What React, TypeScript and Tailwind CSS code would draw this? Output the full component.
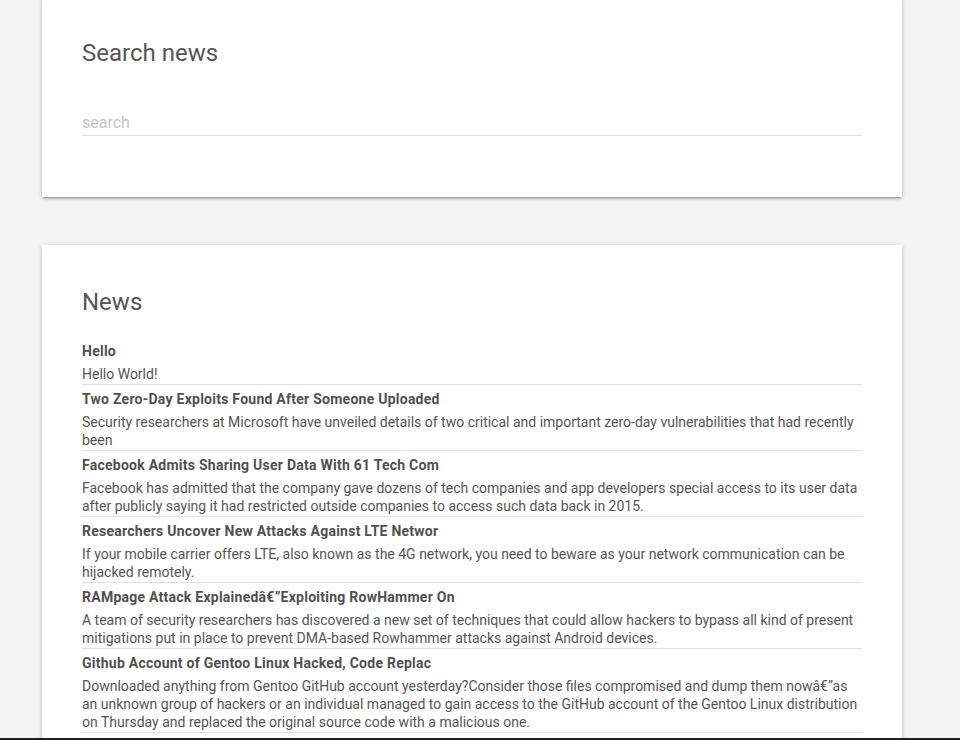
import React, { useState } from 'react';

interface NewsItem {
  title: string;
  body: string;
}

const news: NewsItem[] = [
  { title: 'Hello', body: 'Hello World!' },
  {
    title: 'Two Zero-Day Exploits Found After Someone Uploaded',
    body: 'Security researchers at Microsoft have unveiled details of two critical and important zero-day vulnerabilities that had recently been',
  },
  {
    title: 'Facebook Admits Sharing User Data With 61 Tech Com',
    body: 'Facebook has admitted that the company gave dozens of tech companies and app developers special access to its user data after publicly saying it had restricted outside companies to access such data back in 2015.',
  },
  {
    title: 'Researchers Uncover New Attacks Against LTE Networ',
    body: 'If your mobile carrier offers LTE, also known as the 4G network, you need to beware as your network communication can be hijacked remotely.',
  },
  {
    title: 'RAMpage Attack Explainedâ€”Exploiting RowHammer On',
    body: 'A team of security researchers has discovered a new set of techniques that could allow hackers to bypass all kind of present mitigations put in place to prevent DMA-based Rowhammer attacks against Android devices.',
  },
  {
    title: 'Github Account of Gentoo Linux Hacked, Code Replac',
    body: 'Downloaded anything from Gentoo GitHub account yesterday?Consider those files compromised and dump them nowâ€”as an unknown group of hackers or an individual managed to gain access to the GitHub account of the Gentoo Linux distribution on Thursday and replaced the original source code with a malicious one.',
  },
];

const cardClass =
  'bg-white px-10 pt-[41px] shadow-[0_2px_2px_0_rgba(0,0,0,0.14),0_3px_1px_-2px_rgba(0,0,0,0.12),0_1px_5px_0_rgba(0,0,0,0.2)]';

export default function App() {
  const [query, setQuery] = useState('');

  return (
    <div className="min-h-screen bg-[#f4f4f4] font-['Roboto',sans-serif] text-[#555]">
      <div className="ml-[42px] w-[860px] -mt-[4px] pb-10">
        <div className={`${cardClass} pb-10`}>
          <h2 className="text-[24px] leading-8 font-normal">Search news</h2>
          <input
            type="text"
            value={query}
            onChange={(e) => setQuery(e.target.value)}
            placeholder="search"
            className="mt-[41px] mb-[21px] block h-[26px] w-full border-b border-[#e0e0e0] bg-transparent text-[16px] outline-none placeholder:text-[#c4c4c4]"
          />
        </div>

        <div className={`${cardClass} mt-[48px] pb-10`}>
          <h2 className="text-[24px] leading-8 font-normal">News</h2>
          <ul className="mt-[19px]">
            {news.map((item, i) => (
              <li
                key={i}
                className={`pt-1 pb-px ${i > 0 ? 'border-t border-[#e0e0e0]' : ''} ${
                  i === news.length - 1 ? 'border-b border-[#e0e0e0]' : ''
                }`}
              >
                <div className="text-[14px] leading-5 font-bold tracking-[0.25px] text-[#505050]">{item.title}</div>
                <p className="mt-1 text-[14px] leading-[18px]">{item.body}</p>
              </li>
            ))}
          </ul>
        </div>
      </div>
      <div className="fixed bottom-0 left-0 right-0 h-[2px] bg-[#1e1e1e]" />
    </div>
  );
}
